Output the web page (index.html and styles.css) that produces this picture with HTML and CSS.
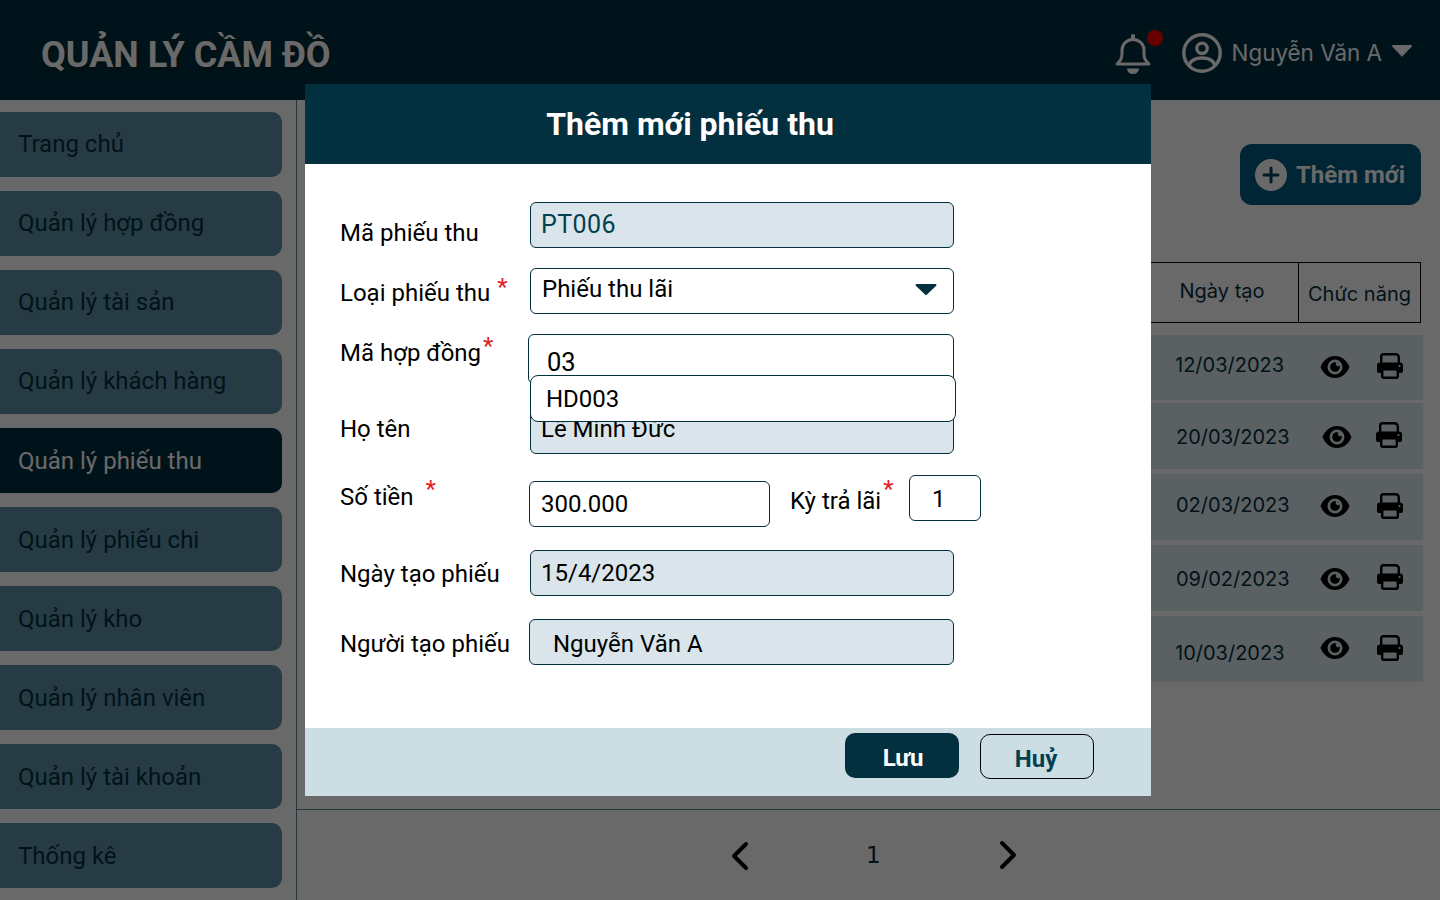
FILE: index.html
```html
<!DOCTYPE html>
<html lang="vi">
<head>
    <meta charset="UTF-8">
    <meta name="viewport" content="width=device-width, initial-scale=1.0">
    <title>Quản lý cầm đồ</title>
    <link rel="stylesheet" href="styles.css">
</head>
<body>
    <header class="topbar">
        <div class="brand">QUẢN LÝ CẦM ĐỒ</div>
        <div class="bell">
            <svg width="38" height="42" viewBox="0 0 38 42" fill="none" stroke="#fff" stroke-width="3" stroke-linejoin="round" stroke-linecap="round">
                <path d="M3 31c3-3 5-5 5-10v-4c0-6 5-10.500 11-10.500s11 4.500 11 10.500v4c0 5 2 7 5 10z"/>
                <path d="M19 3v3" stroke-width="4"/>
                <path d="M13 35.500h12a6 5.500 0 0 1-12 0z" fill="#fff" stroke="none"/>
            </svg>
            <span class="bell-dot"></span>
        </div>
        <svg class="avatar" width="42" height="42" viewBox="0 0 42 42" fill="none" stroke="#fff" stroke-width="3.400">
            <circle cx="21" cy="21" r="18.200"/>
            <circle cx="21" cy="16.300" r="5.200"/>
            <path d="M8 33c2-5 7-7 13-7s11 2 13 7"/>
        </svg>
        <div class="username">Nguyễn Văn A</div>
        <svg class="user-caret" width="20" height="13" viewBox="0 0 20 13"><path d="M1 1h18a1 1 0 0 1 .8 1.600l-9 9.500a1 1 0 0 1-1.600 0l-9-9.500A1 1 0 0 1 1 1z" fill="#fff"/></svg>
    </header>

    <div class="app">
        <nav class="sidebar">
            <a class="nav-item">Trang chủ</a>
            <a class="nav-item">Quản lý hợp đồng</a>
            <a class="nav-item">Quản lý tài sản</a>
            <a class="nav-item">Quản lý khách hàng</a>
            <a class="nav-item active">Quản lý phiếu thu</a>
            <a class="nav-item">Quản lý phiếu chi</a>
            <a class="nav-item">Quản lý kho</a>
            <a class="nav-item">Quản lý nhân viên</a>
            <a class="nav-item">Quản lý tài khoản</a>
            <a class="nav-item">Thống kê</a>
        </nav>

        <main class="content">
            <div class="toolbar">
                <button class="add-btn">
                    <svg width="32" height="32" viewBox="0 0 32 32"><circle cx="16" cy="16" r="16" fill="#fff"/><path d="M16 9v14M9 16h14" stroke="#00405e" stroke-width="3" stroke-linecap="round"/></svg>
                    Thêm mới
                </button>
            </div>

            <div class="table">
                <div class="thead">
                    <div class="th th-rest"></div>
                    <div class="th th-date">Ngày tạo</div>
                    <div class="th th-action">Chức năng</div>
                </div>
                <div class="row">
                    <span class="date">12/03/2023</span>
                    <svg class="eye" width="30" height="24" viewBox="0 0 30 24"><use href="#eye"/></svg>
                    <svg class="printer" width="26" height="26" viewBox="0 0 26 26"><use href="#printer"/></svg>
                </div>
                <div class="row">
                    <span class="date">20/03/2023</span>
                    <svg class="eye" width="30" height="24" viewBox="0 0 30 24"><use href="#eye"/></svg>
                    <svg class="printer" width="26" height="26" viewBox="0 0 26 26"><use href="#printer"/></svg>
                </div>
                <div class="row">
                    <span class="date">02/03/2023</span>
                    <svg class="eye" width="30" height="24" viewBox="0 0 30 24"><use href="#eye"/></svg>
                    <svg class="printer" width="26" height="26" viewBox="0 0 26 26"><use href="#printer"/></svg>
                </div>
                <div class="row">
                    <span class="date">09/02/2023</span>
                    <svg class="eye" width="30" height="24" viewBox="0 0 30 24"><use href="#eye"/></svg>
                    <svg class="printer" width="26" height="26" viewBox="0 0 26 26"><use href="#printer"/></svg>
                </div>
                <div class="row">
                    <span class="date">10/03/2023</span>
                    <svg class="eye" width="30" height="24" viewBox="0 0 30 24"><use href="#eye"/></svg>
                    <svg class="printer" width="26" height="26" viewBox="0 0 26 26"><use href="#printer"/></svg>
                </div>
            </div>

            <div class="pager">
                <svg class="pager-prev" width="20" height="30" viewBox="0 0 20 30" fill="none" stroke="#000" stroke-width="4" stroke-linecap="round" stroke-linejoin="round"><path d="M16 3 4 15l12 12"/></svg>
                <span class="page-num">1</span>
                <svg class="pager-next" width="20" height="30" viewBox="0 0 20 30" fill="none" stroke="#000" stroke-width="4" stroke-linecap="round" stroke-linejoin="round"><path d="m4 3 12 12L4 27"/></svg>
            </div>
        </main>
    </div>

    <div class="overlay"></div>

    <section class="modal">
        <h2 class="modal-title">Thêm mới phiếu thu</h2>
        <div class="modal-body">
            <div class="form-row row-code">
                <label class="form-label">Mã phiếu thu</label>
                <div class="field readonly code-value">PT006</div>
            </div>
            <div class="form-row row-type">
                <label class="form-label">Loại phiếu thu<span class="req">*</span></label>
                <div class="field select-value">
                    Phiếu thu lãi
                    <svg class="select-caret" width="22" height="13" viewBox="0 0 22 13"><path d="M1.500 1h19a1 1 0 0 1 .7 1.700l-9.500 9a1 1 0 0 1-1.400 0l-9.500-9A1 1 0 0 1 1.500 1z" fill="#03303f"/></svg>
                </div>
            </div>
            <div class="form-row row-contract">
                <label class="form-label">Mã hợp đồng<span class="req">*</span></label>
                <div class="field contract-value">03</div>
                <div class="suggest">HD003</div>
            </div>
            <div class="form-row row-name">
                <label class="form-label">Họ tên</label>
                <div class="field readonly">Lê Minh Đức</div>
            </div>
            <div class="form-row row-money">
                <label class="form-label">Số tiền<span class="req req-wide">*</span></label>
                <div class="field money-value">300.000</div>
                <label class="form-label term-label">Kỳ trả lãi<span class="req">*</span></label>
                <div class="field term-value">1</div>
            </div>
            <div class="form-row row-date">
                <label class="form-label">Ngày tạo phiếu</label>
                <div class="field readonly">15/4/2023</div>
            </div>
            <div class="form-row row-author">
                <label class="form-label">Người tạo phiếu</label>
                <div class="field readonly author-value">Nguyễn Văn A</div>
            </div>
        </div>
        <div class="modal-footer">
            <button class="btn-save">Lưu</button>
            <button class="btn-cancel">Huỷ</button>
        </div>
    </section>

    <svg class="defs" width="0" height="0">
        <symbol id="eye" viewBox="0 0 30 24">
            <path fill-rule="evenodd" d="M15 1C8.500 1 3 5.500 .5 12 3 18.500 8.500 23 15 23s12-4.500 14.500-11C27 5.500 21.500 1 15 1zm0 3.500a7.500 7.500 0 1 1 0 15 7.500 7.500 0 0 1 0-15z" fill="#000"/>
            <path d="M15 7.200a4.800 4.800 0 1 0 4.800 4.800c0-.5-.1-1-.2-1.400a2 2 0 0 1-3.200-3.200c-.45-.13-.9-.2-1.400-.2z" fill="#000"/>
        </symbol>
        <symbol id="printer" viewBox="0 0 26 26">
            <path d="M4.200 10V3.700a2.500 2.500 0 0 1 2.500-2.500H18c2.800 0 3.800 1.500 3.800 3.500V10" fill="none" stroke="#000" stroke-width="2.400"/>
            <path fill-rule="evenodd" d="M3 9.500h20a3 3 0 0 1 3 3v5.500a2 2 0 0 1-2 2h-2v-4H4v4H2a2 2 0 0 1-2-2v-5.500a3 3 0 0 1 3-3zm19.500 2.500a1.100 1.100 0 1 0 0 2.200 1.100 1.100 0 0 0 0-2.200z" fill="#000"/>
            <rect x="5.200" y="16.200" width="15.600" height="8.600" rx="1.500" fill="none" stroke="#000" stroke-width="2.400"/>
        </symbol>
    </svg>
</body>
</html>
```

FILE: styles.css
```css
* {
    margin: 0;
    padding: 0;
    box-sizing: border-box;
}
html, body {
    height: 900px;
    overflow: hidden;
}
body {
    font-family: Roboto, Arial, sans-serif;
    background-color: #fff;
    color: #03303f;
}
button {
    font-family: inherit;
    border: none;
}
.defs {
    position: absolute;
}

/* top bar */
.topbar {
    height: 100px;
    background-color: #03303f;
    display: flex;
    align-items: center;
    color: #fff;
    padding-left: 41px;
}
.brand {
    font-size: 36px;
    font-weight: 700;
    margin-top: 10px;
    text-shadow: 0 4px 4px rgba(0, 0, 0, 0.25);
    flex: 1;
}
.bell {
    position: relative;
    width: 38px;
    height: 42px;
    margin-top: 8px;
    margin-right: 29px;
}
.bell-dot {
    position: absolute;
    top: -3px;
    left: 33px;
    width: 16px;
    height: 16px;
    border-radius: 50%;
    background-color: #f00;
}
.avatar {
    margin-right: 9px;
    margin-top: 6px;
}
.username {
    font-family: Inter, Roboto, sans-serif;
    font-size: 22.4px;
    margin-right: 10px;
    margin-top: 5px;
}
.user-caret {
    margin-right: 28px;
}

/* layout */
.app {
    display: flex;
    height: 800px;
}
.sidebar {
    width: 297px;
    border-right: 1px solid #5a7f93;
    padding-top: 12px;
    display: flex;
    flex-direction: column;
    gap: 14px;
}
.nav-item {
    width: 282px;
    height: 65px;
    padding-left: 18px;
    display: flex;
    align-items: center;
    font-size: 24px;
    background-color: #5f90a6;
    border-radius: 0 10px 10px 0;
    color: #03303f;
}
.nav-item:nth-child(-n+4) {
    padding-bottom: 2px;
}
.nav-item.active {
    background-color: #03303f;
    color: #fff;
}
.content {
    flex: 1;
    display: flex;
    flex-direction: column;
}
.toolbar {
    display: flex;
    justify-content: flex-end;
    padding: 44px 19px 0 0;
}
.add-btn {
    width: 181px;
    height: 61px;
    background-color: #005a80;
    border-radius: 12px;
    color: #fff;
    font-size: 24px;
    font-weight: 700;
    display: flex;
    align-items: center;
    gap: 9px;
    padding-left: 15px;
}

/* table */
.table {
    margin: 57px 17px 0 13px;
}
.thead {
    display: flex;
    height: 61px;
    margin-right: 2px;
    border: 1px solid #000;
    font-family: Inter, Roboto, sans-serif;
}
.th {
    display: flex;
    align-items: center;
    justify-content: center;
}
.th-rest {
    flex: 1;
}
.th-date {
    width: 148px;
    font-size: 20px;
    border-right: 1px solid #000;
    padding-bottom: 4px;
    padding-right: 5px;
}
.th-action {
    width: 121px;
    font-size: 20px;
    padding-top: 2px;
}
.row {
    height: 66px;
    margin-top: 5px;
    background-color: #dce8ee;
    display: flex;
    align-items: center;
    justify-content: flex-end;
    font-family: Inter, Roboto, sans-serif;
    font-size: 20px;
}
.row:nth-child(2) {
    margin-top: 12px;
    height: 65px;
}
.row:nth-child(3) {
    margin-top: 3px;
}
.date {
    flex: none;
    width: 145px;
}
.printer {
    margin: 0 20px 0 27px;
}

/* the rows do not line up with each other, nudge them per row */
.row:nth-child(2) .date { margin-bottom: 5px; }
.row:nth-child(2) .eye { margin-bottom: 1px; }
.row:nth-child(2) .printer { margin-bottom: 4px; }
.row:nth-child(3) .date { margin-top: 2px; padding-left: 1px; }
.row:nth-child(3) .eye { margin: 2px 0 0 2px; }
.row:nth-child(3) .printer { margin: 0 21px 2px 24px; }
.row:nth-child(4) .date { margin-bottom: 4px; padding-left: 1px; }
.row:nth-child(4) .eye { margin-bottom: 2px; }
.row:nth-child(4) .printer { margin-bottom: 2px; }
.row:nth-child(5) .date { margin-top: 1px; padding-left: 1px; }
.row:nth-child(5) .eye { margin-top: 2px; }
.row:nth-child(5) .printer { margin-bottom: 2px; }
.row:nth-child(6) .date { margin-top: 8px; }
.row:nth-child(6) .eye { margin-bottom: 2px; }
.row:nth-child(6) .printer { margin-bottom: 2px; }

/* pager */
.pager {
    margin-top: auto;
    height: 91px;
    border-top: 1px solid #5a7f93;
    display: flex;
    align-items: center;
    padding-left: 433px;
}
.pager-prev {
    margin-top: 2px;
}
.pager-next {
    margin-bottom: 1px;
}
.page-num {
    font-family: "DejaVu Sans", Inter, sans-serif;
    font-size: 23px;
    margin: 0 117px 0 116px;
}

/* dim + dialog */
.overlay {
    position: fixed;
    inset: 0;
    background-color: rgba(0, 0, 0, 0.59);
}
.modal {
    position: absolute;
    left: 305px;
    top: 84px;
    width: 846px;
    height: 712px;
    background-color: #fff;
    display: flex;
    flex-direction: column;
}
.modal-title {
    height: 80px;
    background-color: #03303f;
    color: #fff;
    font-size: 32px;
    font-weight: 700;
    display: flex;
    align-items: center;
    justify-content: center;
    padding-right: 76px;
}
.modal-body {
    flex: 1;
    padding: 38px 0 0 35px;
    font-size: 24px;
    color: #000;
}
.form-row {
    display: flex;
    position: relative;
    height: 46px;
}
.form-label {
    width: 190px;
    flex: none;
    padding-top: 17px;
}
.field {
    width: 424px;
    height: 46px;
    border: 1px solid #03303f;
    border-radius: 6px;
    padding-left: 10px;
    display: flex;
    align-items: center;
    background-color: #fff;
    line-height: 1;
}
.readonly {
    background-color: #d9e5eb;
}
.req {
    color: #e02020;
    position: relative;
    top: -6px;
    margin-left: 7px;
}
.req-wide {
    margin-left: 12px;
}

.code-value {
    color: #03404f;
    font-size: 25px;
    letter-spacing: 0.4px;
    padding-bottom: 2px;
}
.row-type {
    margin-top: 20px;
}
.row-type .form-label {
    padding-top: 11px;
}
.select-value {
    padding-left: 11px;
    padding-bottom: 4px;
    justify-content: space-between;
    padding-right: 16px;
}
.row-contract {
    margin-top: 20px;
}
.row-contract .form-label {
    padding-top: 5px;
}
.row-contract .req {
    margin-left: 2px;
    top: -7px;
}
.contract-value {
    margin-left: -2px;
    width: 426px;
    font-size: 25.5px;
    padding: 8px 0 0 18px;
    height: 50px;
}
.suggest {
    position: absolute;
    left: 190px;
    top: 41px;
    width: 426px;
    height: 47px;
    border: 1px solid #03303f;
    border-radius: 8px;
    background-color: #fff;
    padding-left: 15px;
    display: flex;
    align-items: center;
    z-index: 2;
}
.row-name {
    margin-top: 28px;
}
.row-name .form-label {
    padding-top: 7px;
}
.row-name .field {
    padding-bottom: 4px;
}
.row-money {
    margin-top: 27px;
}
.row-money .form-label {
    padding-top: 2px;
}
.row-money .req {
    top: -8px;
}
.money-value {
    width: 241px;
    margin-left: -1px;
    padding-left: 11px;
}
.row-money .term-label {
    width: 119px;
    margin-left: 20px;
    padding-top: 6px;
}
.row-money .term-label .req {
    margin-left: 2px;
    top: -12px;
}
.term-value {
    width: 72px;
    height: 46px;
    margin-top: -6px;
    padding: 2px 0 0 22px;
}
.row-date {
    margin-top: 23px;
}
.row-date .form-label {
    padding-top: 10px;
}
.row-author {
    margin-top: 23px;
}
.row-author .form-label {
    padding-top: 11px;
}
.author-value {
    margin-left: -1px;
    width: 425px;
    padding: 4px 0 0 23px;
}

.modal-footer {
    height: 68px;
    background-color: #cddde4;
    display: flex;
    gap: 21px;
    padding: 5px 0 0 540px;
}
.btn-save, .btn-cancel {
    width: 114px;
    height: 45px;
    border-radius: 10px;
    font-size: 24px;
    font-weight: 700;
    padding-top: 4px;
}
.btn-save {
    background-color: #03303f;
    color: #fff;
    padding-left: 2px;
}
.btn-cancel {
    background: transparent;
    border: 1px solid #000;
    color: #03404f;
    margin-top: 1px;
    padding-right: 2px;
}
```
